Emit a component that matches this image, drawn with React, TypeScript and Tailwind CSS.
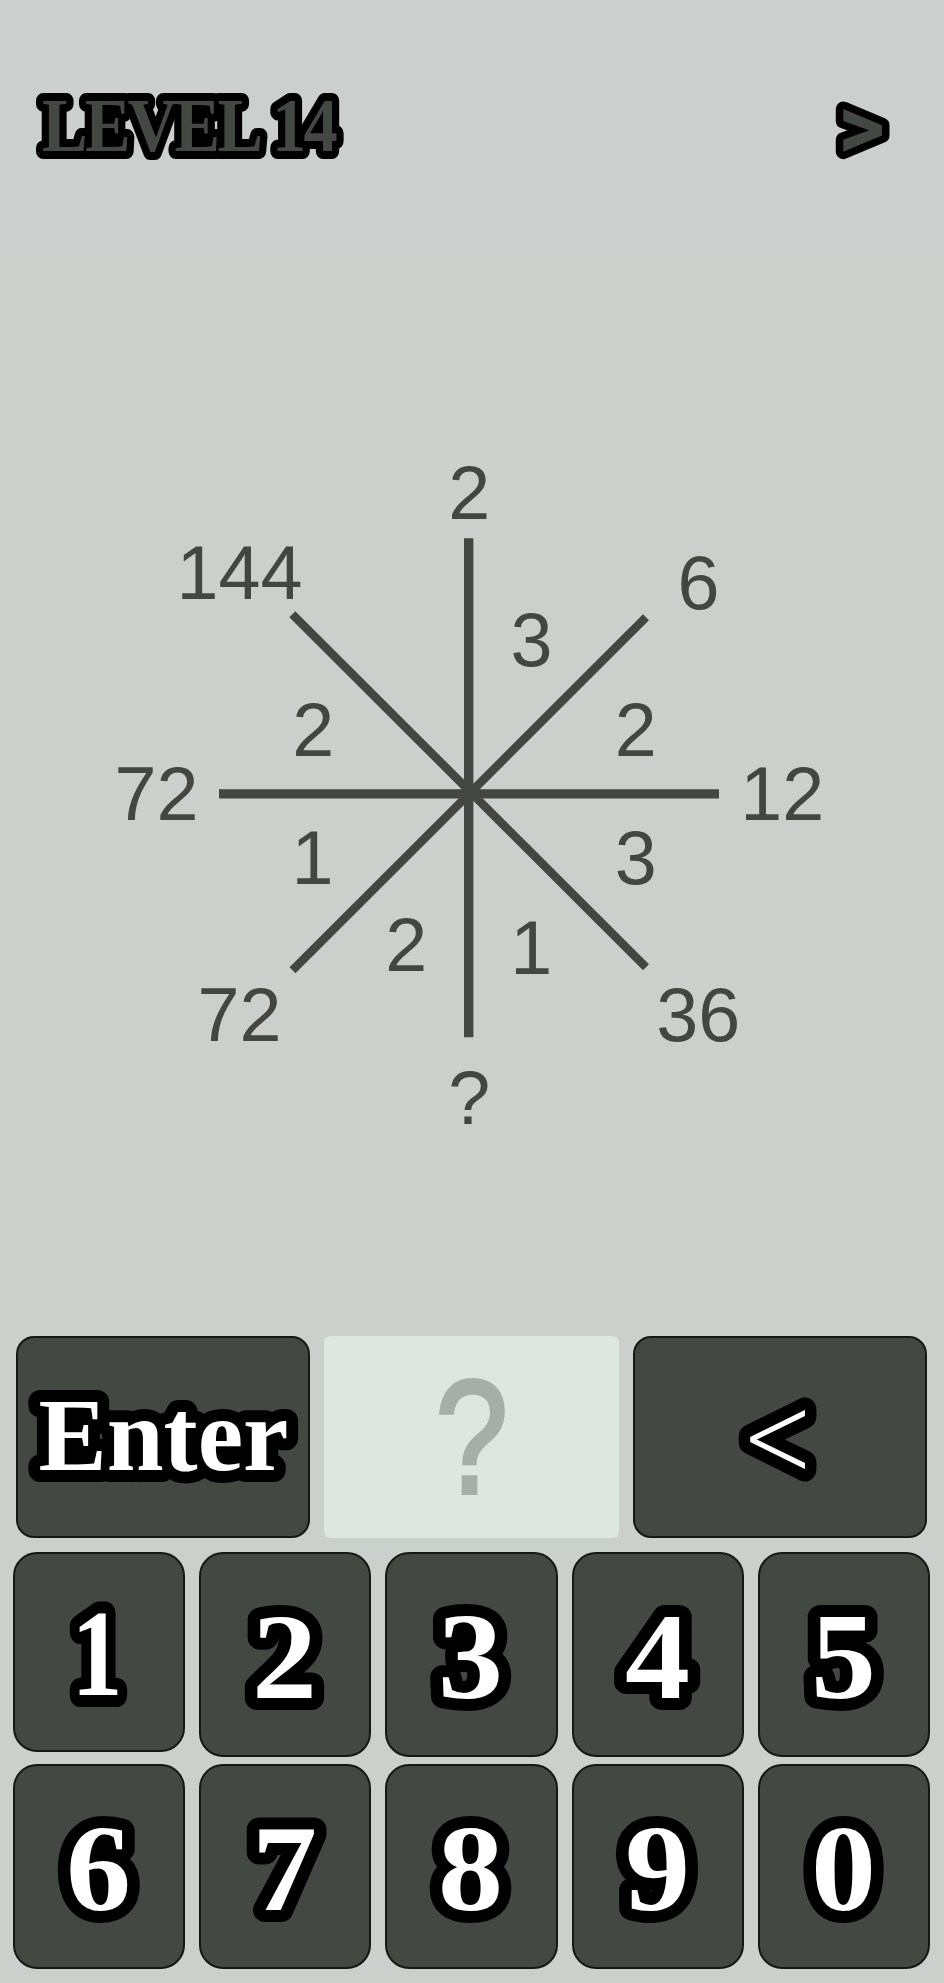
import { useState } from "react"

const spokes = [
  { x1: 468.7, y1: 276.3, x2: 468.7, y2: 775.3, width: 9.4 },
  { x1: 219, y1: 531.9, x2: 719, y2: 531.9, width: 9.4 },
  { x1: 292.3, y1: 352.3, x2: 646, y2: 705.2, width: 8.5 },
  { x1: 292.5, y1: 708.3, x2: 646, y2: 355.3, width: 8.5 }
]

const numbers = [
  { x: 469.2, y: 257.3, value: "2" },
  { x: 239.6, y: 336.7, value: "144" },
  { x: 698.5, y: 347, value: "6" },
  { x: 531.6, y: 404, value: "3" },
  { x: 313.2, y: 494.3, value: "2" },
  { x: 635.8, y: 494.3, value: "2" },
  { x: 156.5, y: 558.3, value: "72" },
  { x: 782.2, y: 558.3, value: "12" },
  { x: 312.6, y: 622, value: "1" },
  { x: 635.7, y: 622, value: "3" },
  { x: 406.3, y: 709, value: "2" },
  { x: 531.3, y: 711.7, value: "1" },
  { x: 239.5, y: 779.3, value: "72" },
  { x: 698.3, y: 779.3, value: "36" },
  { x: 469.2, y: 862, value: "?" }
]

function OutlinedText({
  text,
  x = "50%",
  y,
  size,
  outline = 24,
  length,
  className = "fill-white font-['Liberation_Serif',serif] font-bold"
}: {
  text: string
  x?: string | number
  y: number
  size: number
  outline?: number
  length?: number
  className?: string
}) {
  return (
    <text
      x={x}
      y={y}
      fontSize={size}
      textAnchor="middle"
      textLength={length}
      lengthAdjust="spacingAndGlyphs"
      stroke="#000"
      strokeWidth={outline}
      strokeLinejoin="round"
      paintOrder="stroke"
      className={className}
    >
      {text}
    </text>
  )
}

function NumberKey({
  value,
  onPress
}: {
  value: string
  onPress: (value: string) => void
}) {
  const short = value === "1"
  return (
    <button
      className={
        short
          ? "h-[200px] cursor-pointer rounded-[24px] border-2 border-[#151815] bg-[#444843]"
          : "h-[205px] cursor-pointer rounded-[24px] border-2 border-[#151815] bg-[#444843]"
      }
      onClick={() => onPress(value)}
    >
      <svg className="block h-full w-full">
        <OutlinedText
          text={value}
          x={short ? 82 : 83.5}
          y={short ? 140.5 : 144}
          size={123}
          length={short ? 51 : 65}
        />
      </svg>
    </button>
  )
}

export default function App() {
  const [answer, setAnswer] = useState("")
  const press = (value: string) => setAnswer((prev) => (prev + value).slice(0, 3))

  return (
    <div className="flex h-[1983px] w-[944px] flex-col overflow-hidden bg-[#ccd0cd]">
      <div className="flex h-[262px] justify-between bg-[#cbcfcd]">
        <svg className="h-full w-[400px]">
          <OutlinedText
            text="LEVEL 14"
            x={188.5}
            y={151}
            size={76}
            outline={16}
            length={293}
            className="fill-[#444843] font-['Liberation_Serif',serif] font-bold tracking-[-3px] [word-spacing:1px]"
          />
        </svg>
        <svg className="h-full w-[144px] cursor-pointer">
          <OutlinedText
            text=">"
            x={61.5}
            y={158}
            size={91}
            outline={15}
            className="fill-[#444843] font-[Roboto,sans-serif] font-bold"
          />
        </svg>
      </div>
      <svg className="h-[1058px] w-full bg-[#ccd0cc]" viewBox="0 0 944 1058">
        {spokes.map((s, i) => (
          <line
            key={i}
            x1={s.x1}
            y1={s.y1}
            x2={s.x2}
            y2={s.y2}
            stroke="#444641"
            strokeWidth={s.width}
          />
        ))}
        {numbers.map((n, i) => (
          <text
            key={i}
            x={n.x}
            y={n.y}
            textAnchor="middle"
            className="fill-[#444641] font-['Liberation_Sans',sans-serif] text-[75.5px]"
          >
            {n.value}
          </text>
        ))}
      </svg>
      <div className="mt-4 flex gap-[14px] pr-[17px] pl-4">
        <button
          className="h-[202px] w-[294px] cursor-pointer rounded-[18px] border-2 border-[#151815] bg-[#444843]"
          onClick={() => setAnswer("")}
        >
          <svg className="block h-full w-full">
            <OutlinedText text="Enter" x={145.5} y={132} size={103} length={250} />
          </svg>
        </button>
        <div className="flex h-[202px] w-[295px] items-center justify-center rounded-[6px] bg-[#dee6e1]">
          <div className="scale-x-[0.81] font-['Liberation_Sans',sans-serif] text-[161px] leading-[200px] text-[#a7aeaa] [-webkit-text-stroke:4px_#a7aeaa]">
            {answer || "?"}
          </div>
        </div>
        <button
          className="h-[202px] w-[294px] cursor-pointer rounded-[18px] border-2 border-[#151815] bg-[#444843]"
          onClick={() => setAnswer((prev) => prev.slice(0, -1))}
        >
          <svg className="block h-full w-full">
            <OutlinedText
              text="<"
              x={144.5}
              y={149}
              size={146}
              length={69}
              outline={25}
              className="fill-white font-[Roboto,sans-serif] font-extralight"
            />
          </svg>
        </button>
      </div>
      <div className="mt-[14px] grid grid-cols-5 gap-x-[14px] gap-y-[7px] pr-[14px] pl-[13px]">
        {["1", "2", "3", "4", "5", "6", "7", "8", "9", "0"].map((value) => (
          <NumberKey key={value} value={value} onPress={press} />
        ))}
      </div>
    </div>
  )
}
